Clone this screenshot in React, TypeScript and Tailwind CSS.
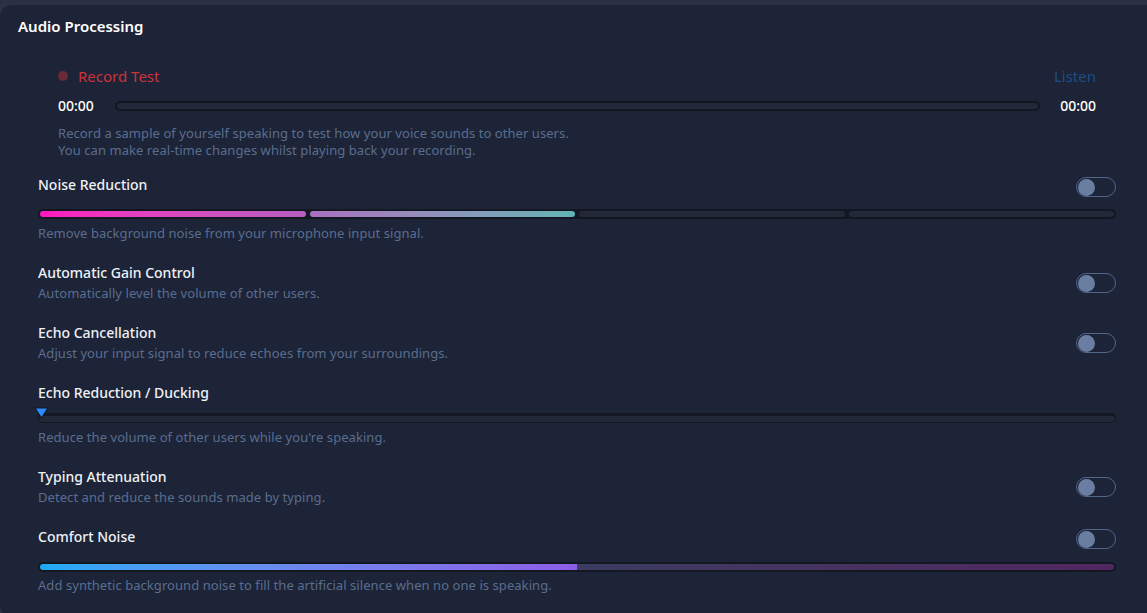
import React from "react";

function Toggle() {
  return (
    <div className="w-[40px] h-[20px] rounded-full border border-[#52658a] flex items-center px-[1px] shrink-0">
      <div className="w-[17px] h-[17px] rounded-full bg-[#6a7ea2]" />
    </div>
  );
}

function Label({ children }: { children: React.ReactNode }) {
  return <div className="text-[14px] leading-[20px] font-medium text-[#eef1f6]">{children}</div>;
}

function Desc({ children, className = "" }: { children: React.ReactNode; className?: string }) {
  return <div className={"text-[13px] leading-[20px] tracking-[0.06px] text-[#5a6d8e] " + className}>{children}</div>;
}

function ToggleRow({ label, desc }: { label: string; desc: string }) {
  return (
    <div className="flex items-center justify-between">
      <div className="flex flex-col">
        <Label>{label}</Label>
        <Desc>{desc}</Desc>
      </div>
      <Toggle />
    </div>
  );
}

export default function App() {
  return (
    <div
      className="w-[1147px] h-[613px] overflow-hidden bg-[#2a3143] pt-[5px]"
      style={{ fontFamily: "'Noto Sans', 'Open Sans', sans-serif" }}
    >
      <div className="w-[1170px] h-[612px] rounded-[12px] bg-[#1d2438] pt-[11px] pl-[18px]">
        <div className="text-[15px] leading-[20px] font-semibold text-white">Audio Processing</div>

        <div className="pl-[20px] w-[1098px] flex flex-col">
          {/* Record test */}
          <div className="px-[20px] mt-[30px]">
            <div className="flex items-center justify-between h-[20px]">
              <div className="flex items-center gap-[10px]">
                <div className="w-[10px] h-[10px] rounded-full bg-[#6c2a38]" />
                <span className="text-[15px] leading-[20px] text-[#cc323c]">Record Test</span>
              </div>
              <span className="text-[15px] leading-[20px] text-[#1d4c88]">Listen</span>
            </div>
            <div className="flex items-center gap-[20px] h-[20px] mt-[10px]">
              <span className="text-[14px] leading-[20px] font-medium text-white w-[37px]">00:00</span>
              <div className="flex-1 h-[10px] rounded-full bg-[#222839] border-2 border-[#131722]" />
              <span className="text-[14px] leading-[20px] font-medium text-white">00:00</span>
            </div>
            <div className="mt-[9px] text-[13px] leading-[17px] tracking-[0.06px] text-[#5a6d8e]">
              <div>Record a sample of yourself speaking to test how your voice sounds to other users.</div>
              <div>You can make real-time changes whilst playing back your recording.</div>
            </div>
          </div>

          {/* Noise reduction */}
          <div className="mt-[16px] flex flex-col">
            <div className="flex items-center justify-between h-[20px]">
              <Label>Noise Reduction</Label>
              <div className="mt-[4px]">
                <Toggle />
              </div>
            </div>
            <div className="mt-[14px] h-[10px] rounded-full bg-[#131722] p-[2px] flex gap-[4px]">
              <div className="flex-1 rounded-full bg-gradient-to-r from-[#ff14be] to-[#b45dc0]" />
              <div className="flex-1 rounded-full bg-gradient-to-r from-[#a96fc0] to-[#5fb3b5]" />
              <div className="flex-1 rounded-full bg-[#232839]" />
              <div className="flex-1 rounded-full bg-[#232839]" />
            </div>
            <Desc className="mt-[4px]">Remove background noise from your microphone input signal.</Desc>
          </div>

          <div className="mt-[20px]">
            <ToggleRow label="Automatic Gain Control" desc="Automatically level the volume of other users." />
          </div>
          <div className="mt-[20px]">
            <ToggleRow label="Echo Cancellation" desc="Adjust your input signal to reduce echoes from your surroundings." />
          </div>

          {/* Echo reduction */}
          <div className="mt-[20px] flex flex-col">
            <Label>Echo Reduction / Ducking</Label>
            <div className="relative mt-[10px] h-[10px] rounded-full bg-[#232839] border-t-[3px] border-x border-b border-[#131722]">
              <svg
                className="absolute left-[-5px] top-[-9px]"
                width="15"
                height="12"
                viewBox="0 0 15 12"
              >
                <polygon points="1,1 14,1 7.5,11" fill="#2a8cff" stroke="#131722" strokeWidth="1.2" strokeLinejoin="round" />
              </svg>
            </div>
            <Desc className="mt-[4px]">Reduce the volume of other users while you're speaking.</Desc>
          </div>

          <div className="mt-[20px]">
            <ToggleRow label="Typing Attenuation" desc="Detect and reduce the sounds made by typing." />
          </div>

          {/* Comfort noise */}
          <div className="mt-[20px] flex flex-col">
            <div className="flex items-center justify-between h-[20px]">
              <Label>Comfort Noise</Label>
              <div className="mt-[4px]">
                <Toggle />
              </div>
            </div>
            <div className="mt-[15px] h-[10px] rounded-full bg-[#131722] p-[2px]">
              <div className="h-full w-full rounded-full overflow-hidden flex">
                <div className="w-1/2 h-full bg-gradient-to-r from-[#18aaf6] to-[#8c5de6]" />
                <div className="w-1/2 h-full bg-gradient-to-r from-[#3b3c60] to-[#512660]" />
              </div>
            </div>
            <Desc className="mt-[3px]">Add synthetic background noise to fill the artificial silence when no one is speaking.</Desc>
          </div>
        </div>
      </div>
    </div>
  );
}
